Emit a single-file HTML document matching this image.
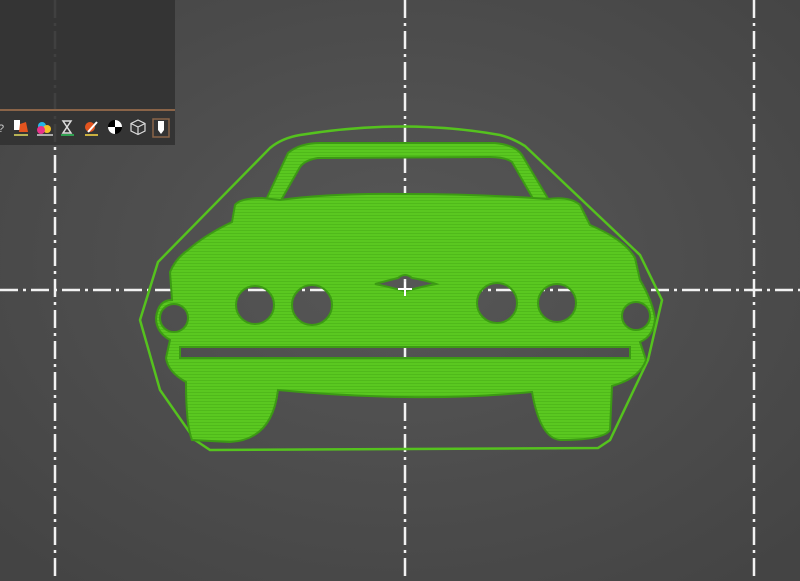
<!DOCTYPE html>
<html><head><meta charset="utf-8"><style>
html,body{margin:0;padding:0;width:800px;height:581px;overflow:hidden;background:#4a4a4a}
</style></head><body>
<svg width="800" height="581" viewBox="0 0 800 581" xmlns="http://www.w3.org/2000/svg">
<defs>
<radialGradient id="bg" cx="0.5" cy="0.45" r="0.7">
<stop offset="0" stop-color="#575757"/><stop offset="1" stop-color="#444"/>
</radialGradient>
<pattern id="stripe" width="4" height="3" patternUnits="userSpaceOnUse">
<rect width="4" height="3" fill="#5ac820"/><rect y="2" width="4" height="1" fill="#50b91b"/>
</pattern>
</defs>
<rect width="800" height="581" fill="url(#bg)"/>
<g stroke="#f2f2f2" stroke-width="2.5" stroke-dasharray="18 5 3 5" fill="none">
<line x1="55" y1="0" x2="55" y2="581"/>
<line x1="405" y1="0" x2="405" y2="581"/>
<line x1="754" y1="0" x2="754" y2="581"/>
<line x1="0" y1="290" x2="800" y2="290"/>
</g>
<path d="M300,135 Q405,118 500,135 Q512,138 525,146 L640,255 L662,300 L648,360 L610,440 L598,448 L210,450 L195,440 L160,390 L140,320 L158,262 L270,148 Q282,138 300,135 Z" fill="none" stroke="#55c21e" stroke-width="2.5"/>
<g fill="url(#stripe)" stroke="#3c9a14" stroke-width="2" fill-rule="evenodd">
<path d="M265,202 L288,153 Q300,143 320,143 L495,143 Q515,145 522,155 L550,202 L535,202 L512,162 Q505,157 490,157 L318,158 Q305,160 300,167 L280,202 Z"/>
<path d="M235,205 Q240,198 262,198 L280,200 Q330,193 405,194 Q480,194 548,199 Q570,196 580,205 L590,225 Q625,240 635,258 L640,280 Q652,300 655,318 Q654,336 640,342 L646,360 Q640,378 612,386 L610,430 Q604,440 560,440 Q540,438 532,392 Q470,398 405,397 Q340,396 278,390 Q272,440 230,442 L192,440 Q186,425 186,382 Q168,372 166,358 L170,340 Q156,332 156,318 Q158,300 172,300 L170,272 Q176,258 188,250 Q205,235 232,222 Z
M160,318 a14,14 0 1 0 28,0 a14,14 0 1 0 -28,0 Z
M236,305 a19,19 0 1 0 38,0 a19,19 0 1 0 -38,0 Z
M292,305 a20,20 0 1 0 40,0 a20,20 0 1 0 -40,0 Z
M477,303 a20,20 0 1 0 40,0 a20,20 0 1 0 -40,0 Z
M538,303 a19,19 0 1 0 38,0 a19,19 0 1 0 -38,0 Z
M622,316 a14,14 0 1 0 28,0 a14,14 0 1 0 -28,0 Z
M180,347 L630,347 L630,358 L180,358 Z
M375,284 Q390,280 398,278 Q405,272 412,278 Q425,280 436,284 Q420,287 410,290 Q405,292 400,290 Q390,287 375,284 Z"/>
</g>
<line x1="405" y1="282" x2="405" y2="296" stroke="#fff" stroke-width="2"/>
<line x1="398" y1="289" x2="412" y2="289" stroke="#fff" stroke-width="2"/>
<rect x="0" y="0" width="175" height="145" fill="#333" fill-opacity="0.93"/>
<rect x="0" y="109" width="175" height="2" fill="#8a6448"/>
<g>
<text x="-2" y="132" font-family="Liberation Sans" font-size="11" fill="#ccc">?</text>
<rect x="14" y="120" width="6" height="10" fill="#fff"/><path d="M20,124 L26,122 L28,132 L19,132Z" fill="#e2541f"/><rect x="14" y="134" width="14" height="2" fill="#b7b356"/>
<circle cx="42" cy="126" r="4" fill="#24b8e8"/><circle cx="47" cy="129" r="4" fill="#f2c12a"/><circle cx="41" cy="130" r="4" fill="#e8328a"/><rect x="37" y="134" width="16" height="2" fill="#aaa"/>
<path d="M63,121 L71,121 L67,127 L71,133 L63,133 L67,127Z" fill="none" stroke="#ddd" stroke-width="1.5"/><rect x="61" y="134" width="13" height="2" fill="#2fa050"/>
<circle cx="90" cy="127" r="5" fill="#e2541f"/><path d="M88,132 L97,122" stroke="#fff" stroke-width="2"/><rect x="85" y="134" width="13" height="2" fill="#c9b040"/>
<circle cx="115" cy="127" r="7" fill="#000"/><path d="M115,120 A7,7 0 0 1 122,127 L115,127Z M115,127 L108,127 A7,7 0 0 0 115,134Z" fill="#fff"/>
<path d="M138,120 L145,123.5 L145,131 L138,134.5 L131,131 L131,123.5Z M131,123.5 L138,127 L145,123.5 M138,127 L138,134.5" fill="none" stroke="#ddd" stroke-width="1.2"/>
<rect x="153" y="119" width="16" height="18" fill="none" stroke="#8a6448" stroke-width="1.5"/>
<path d="M158,121 L164,121 L164,130 L161,134 L158,130Z" fill="#fff"/>
</g>
</svg>
</body></html>
